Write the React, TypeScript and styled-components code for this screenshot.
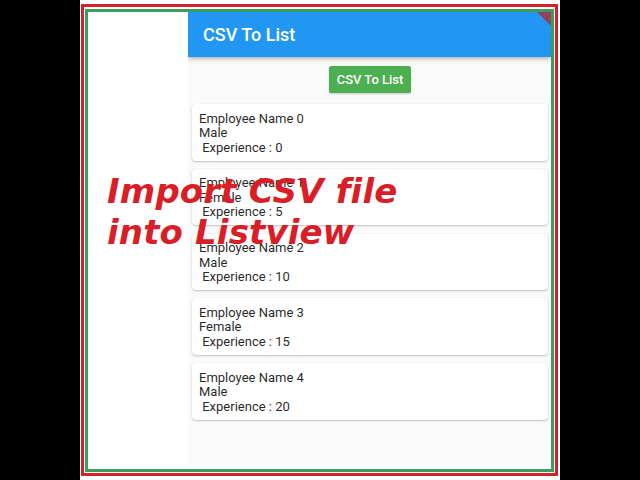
import * as React from "react";
import styled, { createGlobalStyle } from "styled-components";

const Global = createGlobalStyle`
  html, body {
    margin: 0;
    padding: 0;
    background: #000000;
  }
  * {
    box-sizing: border-box;
  }
`;

const Stage = styled.div`
  position: relative;
  width: 640px;
  height: 480px;
  display: flex;
  justify-content: center;
  background: #000000;
`;

const Frame = styled.div`
  width: 480px;
  height: 480px;
  background: #ffffff;
  padding: 4px 2px 4px 1px;
  display: flex;
`;

const RedBorder = styled.div`
  flex: 1;
  display: flex;
  border: 3px solid #d3202c;
  padding: 2px 1px 1px 1px;
  background: #ffffff;
`;

const GreenBorder = styled.div`
  flex: 1;
  display: flex;
  border: 3px solid #3c9e5c;
  padding-bottom: 5px;
  background: #ffffff;
`;

const LeftBlank = styled.div`
  width: 100px;
  background: #ffffff;
`;

const Phone = styled.div`
  position: relative;
  flex: 1;
  display: flex;
  flex-direction: column;
  background: #fafafa;
  overflow: hidden;
  font-family: Roboto, "Liberation Sans", sans-serif;
`;

const AppBar = styled.div`
  height: 45px;
  flex-shrink: 0;
  display: flex;
  align-items: center;
  padding-left: 15px;
  background: #2196f3;
  color: #ffffff;
  font-size: 18px;
  font-weight: 500;
  box-shadow: 0 2px 4px rgba(0, 0, 0, 0.28);
  z-index: 1;
`;

const Banner = styled.svg`
  position: absolute;
  top: 0;
  right: 0;
  z-index: 2;
`;

const Body = styled.div`
  display: flex;
  flex-direction: column;
  align-items: center;
  padding: 9px 3px 0 4px;
`;

const Button = styled.div`
  width: 82px;
  height: 27px;
  display: flex;
  align-items: center;
  justify-content: center;
  background: #4caf50;
  color: #ffffff;
  font-size: 13px;
  font-weight: 500;
  border-radius: 2px;
  box-shadow: 0 1px 2px rgba(0, 0, 0, 0.2);
  margin-bottom: 11px;
`;

const List = styled.div`
  align-self: stretch;
  display: flex;
  flex-direction: column;
  gap: 8.25px;
`;

const Card = styled.div`
  height: 56.5px;
  padding: 7.5px 7px 0 7px;
  background: #ffffff;
  border-radius: 4px;
  box-shadow: 0 1px 2px rgba(0, 0, 0, 0.22), 0 0 1px rgba(0, 0, 0, 0.12);
  color: rgba(0, 0, 0, 0.87);
  font-size: 13px;
  line-height: 14.6px;
  white-space: pre;
`;

const Line = styled.div``;

const Overlay = styled.div`
  position: absolute;
  left: 107px;
  top: 171px;
  font-family: "DejaVu Sans", Verdana, sans-serif;
  font-weight: bold;
  font-style: italic;
  font-size: 34px;
  letter-spacing: 0.15px;
  line-height: 41px;
  color: #d91e27;
  white-space: pre;
  pointer-events: none;
`;

const employees = [
  { name: "Employee Name 0", gender: "Male", exp: 0 },
  { name: "Employee Name 1", gender: "Female", exp: 5 },
  { name: "Employee Name 2", gender: "Male", exp: 10 },
  { name: "Employee Name 3", gender: "Female", exp: 15 },
  { name: "Employee Name 4", gender: "Male", exp: 20 },
];

export default function App() {
  return (
    <>
      <Global />
      <Stage>
        <Frame>
          <RedBorder>
            <GreenBorder>
              <LeftBlank />
              <Phone>
                <AppBar>CSV To List</AppBar>
                <Banner width="14" height="14" viewBox="0 0 14 14">
                  <polygon points="0,0 14,0 14,14" fill="#a8323f" opacity="0.85" />
                </Banner>
                <Body>
                  <Button>CSV To List</Button>
                  <List>
                    {employees.map((e) => (
                      <Card key={e.name}>
                        <Line>{e.name}</Line>
                        <Line>{e.gender}</Line>
                        <Line>{` Experience : ${e.exp}`}</Line>
                      </Card>
                    ))}
                  </List>
                </Body>
              </Phone>
            </GreenBorder>
          </RedBorder>
        </Frame>
        <Overlay>{"Import CSV file\ninto Listview"}</Overlay>
      </Stage>
    </>
  );
}
